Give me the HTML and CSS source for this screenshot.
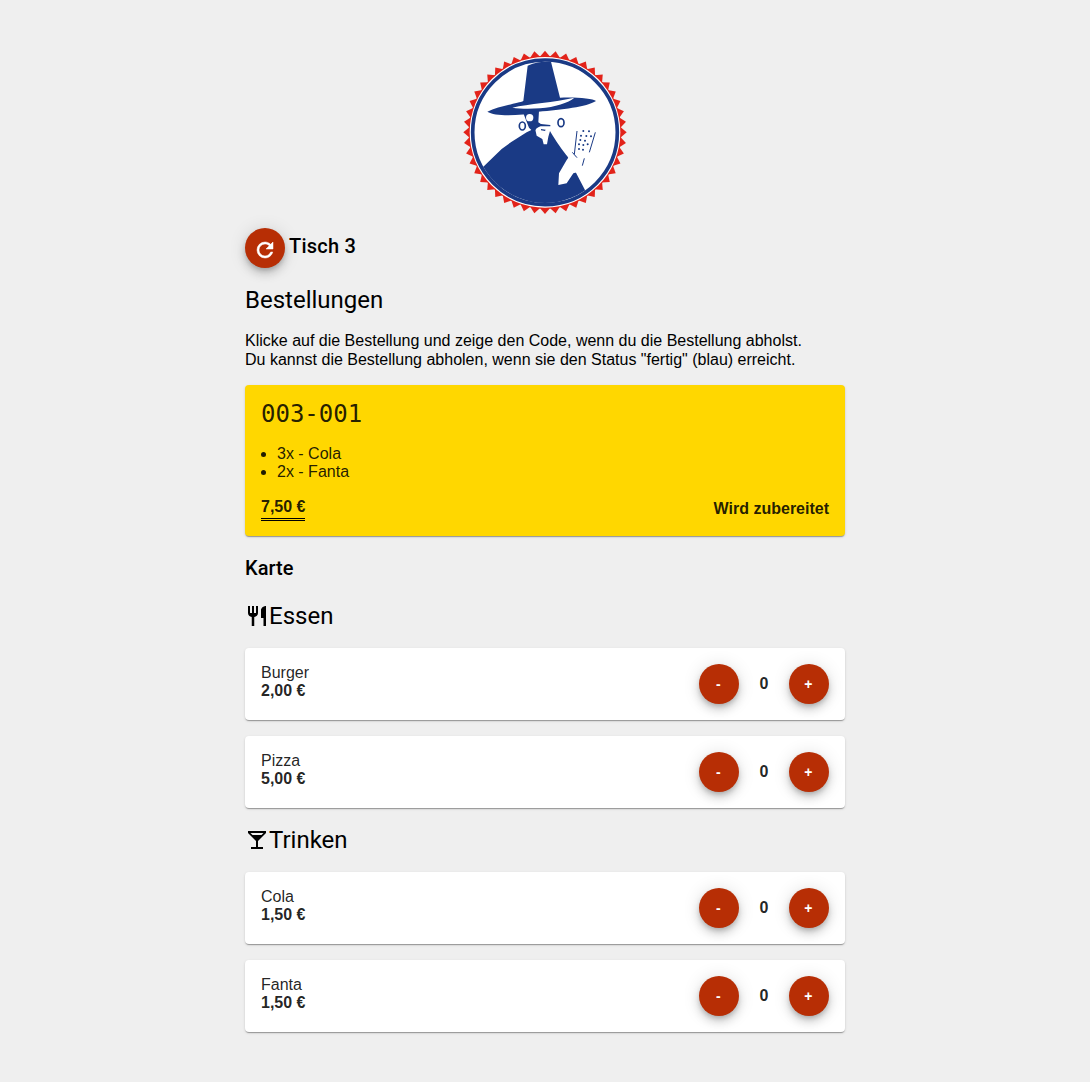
FILE: index.html
```html
<!DOCTYPE html>
<html lang="de">
<head>
    <meta charset="UTF-8">
    <meta name="viewport" content="width=device-width, initial-scale=1.0">
    <title>Bestellungen</title>
    <link rel="stylesheet" href="styles.css">
</head>
<body>
    <div class="page">
        <svg class="logo" viewBox="0 0 540 525" width="180" height="175">
            <defs>
                <polygon id="t1" points="254,36 270,17 286,36"/>
                <g id="t2"><use href="#t1"/><use href="#t1" transform="rotate(7.5 270 262)"/></g>
                <g id="t4"><use href="#t2"/><use href="#t2" transform="rotate(15 270 262)"/></g>
                <g id="t8"><use href="#t4"/><use href="#t4" transform="rotate(30 270 262)"/></g>
                <g id="t16"><use href="#t8"/><use href="#t8" transform="rotate(60 270 262)"/></g>
                <clipPath id="inner"><circle cx="270" cy="262" r="212"/></clipPath>
            </defs>
            <g fill="#e2231a">
                <use href="#t16"/>
                <use href="#t16" transform="rotate(120 270 262)"/>
                <use href="#t16" transform="rotate(240 270 262)"/>
                <circle cx="270" cy="262" r="229"/>
            </g>
            <circle cx="270" cy="262" r="226" fill="#fff"/>
            <circle cx="270" cy="262" r="217" fill="#fff" stroke="#1a3a85" stroke-width="11"/>
            <g clip-path="url(#inner)">
                <path class="ink" d="M85,365 L140,312 L170,290 L215,262 L240,250 L245,272 L262,282 L266,298 L276,298 L280,275 L285,258 C300,285 325,320 338,335 L395,445 L400,525 L50,525 L50,385 Z"/>
                <path class="ink" d="M97,200 C130,183 190,175 205,168 L218,62 C240,52 270,48 288,50 L315,158 C360,156 415,160 423,168 C395,186 320,194 250,200 C190,214 120,214 97,200 Z"/>
                <path class="paper" d="M172,188 C220,176 300,172 358,158 C340,174 300,186 255,190 C225,192 195,192 172,188 Z"/>
                <path class="ink" d="M205,205 L252,198 L250,232 L262,240 L245,250 L236,262 L222,248 Z"/>
                <circle class="paper" cx="224" cy="218" r="11"/>
                <path class="ink" d="M250,236 L286,240 L286,244 L250,244 Z"/>
                <path class="ink" d="M258,252 L272,254 L270,258 L258,256 Z"/>
                <ellipse class="ring" cx="202" cy="243" rx="9" ry="12"/>
                <ellipse class="ring" cx="318" cy="233" rx="9" ry="12"/>
                <path class="paper" d="M310,420 L312,385 L335,345 L352,322 L362,335 L388,340 L392,375 L355,385 L335,415 Z"/>
                <path class="ink-line" d="M366,258 L358,328 M421,262 L403,322 M352,322 L366,338 M388,340 L382,362"/>
                <g class="dots">
                    <circle cx="385" cy="258" r="3"/><circle cx="402" cy="259" r="3"/>
                    <circle cx="378" cy="272" r="3"/><circle cx="394" cy="273" r="3"/><circle cx="408" cy="274" r="3"/>
                    <circle cx="376" cy="285" r="3"/><circle cx="390" cy="287" r="3"/>
                    <circle cx="372" cy="298" r="3"/><circle cx="385" cy="300" r="3"/><circle cx="398" cy="298" r="3"/>
                    <circle cx="372" cy="312" r="3"/><circle cx="384" cy="314" r="3"/>
                </g>
            </g>
        </svg>

        <div class="table-row">
            <button class="round-btn">
                <svg viewBox="0 0 24 24" width="24" height="24"><path d="M17.65,6.35C16.2,4.9 14.21,4 12,4A8,8 0 0,0 4,12A8,8 0 0,0 12,20C15.73,20 18.84,17.45 19.73,14H17.65C16.83,16.33 14.61,18 12,18A6,6 0 0,1 6,12A6,6 0 0,1 12,6C13.66,6 15.14,6.69 16.22,7.78L13,11H20V4L17.65,6.35Z"/></svg>
            </button>
            <span class="table-name">Tisch 3</span>
        </div>

        <h2 class="heading">Bestellungen</h2>
        <p class="hint">Klicke auf die Bestellung und zeige den Code, wenn du die Bestellung abholst.<br>Du kannst die Bestellung abholen, wenn sie den Status "fertig" (blau) erreicht.</p>

        <div class="card order">
            <div class="order-code">003-001</div>
            <ul class="order-items">
                <li>3x - Cola</li>
                <li>2x - Fanta</li>
            </ul>
            <div class="order-foot">
                <span class="order-sum">7,50 €</span>
                <span class="order-status">Wird zubereitet</span>
            </div>
        </div>

        <div class="menu-title">Karte</div>

        <h2 class="heading category">
            <svg viewBox="0 0 24 24" width="24" height="24"><path d="M11,9H9V2H7V9H5V2H3V9C3,11.12 4.66,12.84 6.75,12.97V22H9.25V12.97C11.34,12.84 13,11.12 13,9V2H11V9M16,6V14H18.5V22H21V2C18.24,2 16,4.24 16,6Z"/></svg>Essen
        </h2>
        <div class="card item">
            <div class="item-info"><div>Burger</div><b>2,00 €</b></div>
            <div class="counter"><button class="round-btn">-</button><span class="count">0</span><button class="round-btn">+</button></div>
        </div>
        <div class="card item">
            <div class="item-info"><div>Pizza</div><b>5,00 €</b></div>
            <div class="counter"><button class="round-btn">-</button><span class="count">0</span><button class="round-btn">+</button></div>
        </div>

        <h2 class="heading category">
            <svg viewBox="0 0 24 24" width="24" height="24"><path d="M7.5,7L5.5,5H18.5L16.5,7M11,13V19H6V21H18V19H13V13L21,5V3H3V5L11,13Z"/></svg>Trinken
        </h2>
        <div class="card item">
            <div class="item-info"><div>Cola</div><b>1,50 €</b></div>
            <div class="counter"><button class="round-btn">-</button><span class="count">0</span><button class="round-btn">+</button></div>
        </div>
        <div class="card item">
            <div class="item-info"><div>Fanta</div><b>1,50 €</b></div>
            <div class="counter"><button class="round-btn">-</button><span class="count">0</span><button class="round-btn">+</button></div>
        </div>
    </div>
</body>
</html>
```

FILE: styles.css
```css
body {
    margin: 0;
    background: #efefef;
    color: #000;
    font-family: "Liberation Sans", Arial, sans-serif;
    font-size: 16px;
}
.page {
    width: 600px;
    margin: 0 auto;
    padding: 45px 0 49px;
}
.logo {
    display: block;
    margin: 0 auto 8px;
}
.ink { fill: #1a3a85; }
.paper { fill: #fff; }
.ring {
    fill: none;
    stroke: #1a3a85;
    stroke-width: 5;
}
.ink-line {
    fill: none;
    stroke: #1a3a85;
    stroke-width: 3;
}
.dots { fill: #1a3a85; }
.table-row {
    display: flex;
    align-items: flex-start;
}
.round-btn {
    display: flex;
    align-items: center;
    justify-content: center;
    width: 40px;
    height: 40px;
    padding: 0;
    border: none;
    border-radius: 50%;
    background: #b72e05;
    color: #fff;
    font-family: "Liberation Sans", Arial, sans-serif;
    font-size: 14px;
    font-weight: 700;
    letter-spacing: 1.25px;
    box-shadow: 0 3px 5px -1px rgba(0, 0, 0, .2), 0 6px 10px 0 rgba(0, 0, 0, .14), 0 1px 18px 0 rgba(0, 0, 0, .12);
}
.round-btn svg {
    margin-top: 4px;
    fill: #fff;
    stroke: #fff;
    stroke-width: .5;
}
.table-name {
    margin-left: 4px;
    font-family: Roboto, sans-serif;
    font-size: 20px;
    font-weight: 500;
    letter-spacing: .25px;
    line-height: 36px;
}
.heading {
    margin: 16px 0 0;
    font-family: Roboto, sans-serif;
    font-size: 24px;
    font-weight: 400;
    line-height: 32px;
}
.hint {
    margin: 15px 0 16px;
    line-height: 19px;
}
.card {
    background: #fff;
    border-radius: 4px;
    color: rgba(0, 0, 0, .87);
    box-shadow: 0 2px 1px -1px rgba(0, 0, 0, .2), 0 1px 1px 0 rgba(0, 0, 0, .14), 0 1px 3px 0 rgba(0, 0, 0, .12);
}
.order {
    background: #ffd700;
    padding: 15px 16px 16px;
    height: 151px;
    box-sizing: border-box;
}
.order-code {
    font-family: "DejaVu Sans Mono", monospace;
    font-size: 24px;
    line-height: 28px;
}
.order-items {
    margin: 17px 0;
    padding-left: 16px;
    line-height: 18px;
}
.order-foot {
    display: flex;
    justify-content: space-between;
    align-items: flex-end;
}
.order-sum {
    font-weight: 700;
    line-height: 18px;
    padding-bottom: 2px;
    border-bottom: 3px double #000;
}
.order-status { font-weight: 700; line-height: 18px; padding-bottom: 3px; }
.menu-title {
    margin: 16px 0 1px;
    font-family: Roboto, sans-serif;
    font-size: 20px;
    font-weight: 500;
    line-height: 32px;
}
.category {
    display: flex;
    align-items: center;
    margin-bottom: 16px;
}
.item {
    display: flex;
    justify-content: space-between;
    align-items: center;
    height: 72px;
    padding: 0 16px;
    box-sizing: border-box;
    margin-bottom: 16px;
}
.item-info {
    align-self: flex-start;
    padding-top: 16px;
    line-height: 18px;
}
.counter {
    display: flex;
    align-items: center;
}
.count {
    width: 50px;
    text-align: center;
    font-weight: 700;
}
```
